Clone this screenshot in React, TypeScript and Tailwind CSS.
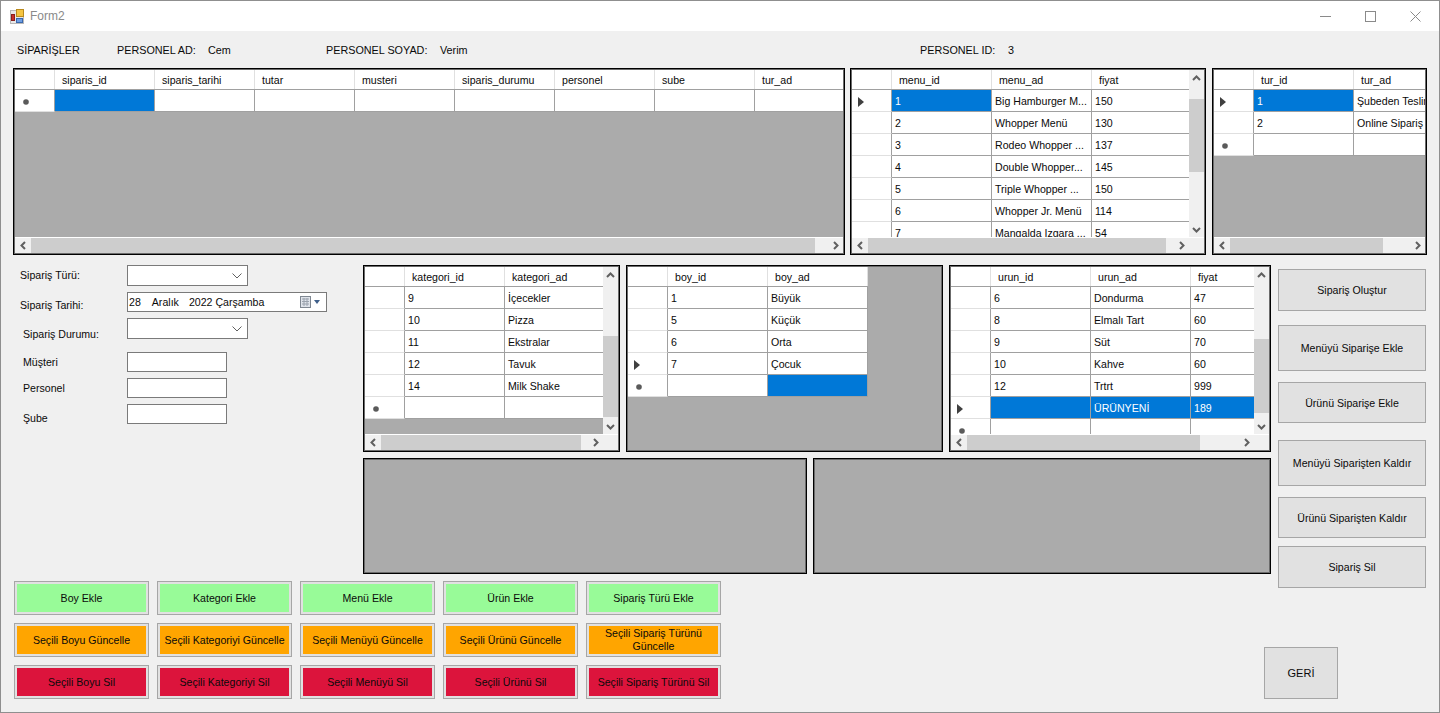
import type { ReactNode } from 'react';

type Cell = { text?: string; selected?: boolean };
type Row = { cells: Cell[]; mark?: 'current' | 'new' };

const c = (text?: string, selected?: boolean): Cell => ({ text, selected });

function Chevron({ dir }: { dir: 'up' | 'down' | 'left' | 'right' }) {
  const points = {
    up: '1,6 4.5,2.5 8,6',
    down: '1,3 4.5,6.5 8,3',
    left: '6,1 2.5,4.5 6,8',
    right: '3,1 6.5,4.5 3,8',
  }[dir];
  return (
    <svg width="9" height="9" viewBox="0 0 9 9" fill="none" stroke="#606060" strokeWidth="2">
      <polyline points={points} />
    </svg>
  );
}

function RowHeaderCell({ mark }: { mark?: Row['mark'] }) {
  return (
    <div className="w-[40px] h-[22px] shrink-0 flex items-center pl-[8px] pt-[2px] bg-white border-r border-b border-r-[#a0a0a0] border-b-[#e0e0e0]">
      {mark === 'current' && (
        <svg width="6" height="10" viewBox="0 0 6 10" className="-ml-[2px]">
          <path d="M0 0 L6 5 L0 10 Z" fill="#404040" />
        </svg>
      )}
      {mark === 'new' && (
        <svg width="6" height="6" viewBox="0 0 6 6">
          <circle cx="3" cy="3" r="2.8" fill="#5a5a5a" />
        </svg>
      )}
    </div>
  );
}

function HScroll({ thumb, corner }: { thumb: string; corner?: boolean }) {
  return (
    <div className="h-[16px] shrink-0 flex bg-[#f0f0f0] border-t border-white">
      <div className="w-[16px] flex items-center justify-center">
        <Chevron dir="left" />
      </div>
      <div className="flex-1">
        <div className={`h-full bg-[#cdcdcd] ${thumb}`} />
      </div>
      <div className="w-[16px] flex items-center justify-center">
        <Chevron dir="right" />
      </div>
      {corner && <div className="w-[15px]" />}
    </div>
  );
}

function VScroll({ thumb }: { thumb: string }) {
  return (
    <div className="w-[15px] shrink-0 flex flex-col bg-[#f0f0f0]">
      <div className="h-[16px] flex items-center justify-center">
        <Chevron dir="up" />
      </div>
      <div className="flex-1">
        <div className={`w-full bg-[#cdcdcd] ${thumb}`} />
      </div>
      <div className="h-[16px] flex items-center justify-center">
        <Chevron dir="down" />
      </div>
    </div>
  );
}

// black line with a softer inner pixel, the screenshot's frames are about 1.5px wide
function Frame({ size, children }: { size: string; children?: ReactNode }) {
  return (
    <div className={`${size} shrink-0 border border-black p-px bg-[#6b6b6b]`}>
      <div className="w-full h-full flex flex-col bg-[#ababab]">{children}</div>
    </div>
  );
}

function DataGrid({
  size,
  columns,
  rows,
  vThumb,
  hThumb,
}: {
  size: string;
  columns: string[];
  rows: Row[];
  vThumb?: string;
  hThumb?: string;
}) {
  return (
    <Frame size={size}>
      <div className="flex-1 min-h-0 flex">
        <div className="flex-1 min-w-0 overflow-hidden">
          <div className="flex w-max h-[20px] bg-white border-b border-b-[#a0a0a0]">
            <div className="w-[40px] shrink-0 border-r border-r-[#e0e0e0]" />
            {columns.map((name) => (
              <div key={name} className="w-[100px] shrink-0 pl-[7px] pt-[2px] flex items-center border-r border-r-[#e0e0e0]">
                {name}
              </div>
            ))}
          </div>
          {rows.map((row, i) => (
            <div key={i} className="flex w-max">
              <RowHeaderCell mark={row.mark} />
              {row.cells.map((cell, j) => (
                <div
                  key={j}
                  className={`w-[100px] h-[22px] shrink-0 pl-[3px] pt-[2px] flex items-center whitespace-nowrap overflow-hidden border-r border-b border-[#a0a0a0] ${
                    cell.selected ? 'bg-[#0078d7] text-white' : 'bg-white'
                  }`}
                >
                  {cell.text}
                </div>
              ))}
            </div>
          ))}
        </div>
        {vThumb && <VScroll thumb={vThumb} />}
      </div>
      {hThumb && <HScroll thumb={hThumb} corner={Boolean(vThumb)} />}
    </Frame>
  );
}

function PlainButton({ size, children }: { size: string; children: ReactNode }) {
  return (
    <div className={`${size} flex items-center justify-center text-center bg-[#e1e1e1] border border-[#a6a6a6]`}>
      {children}
    </div>
  );
}

function ColorButton({ color, children }: { color: string; children: ReactNode }) {
  return (
    <div className="h-[34px] border border-[#a6a6a6] bg-[#e1e1e1] p-[2px]">
      <div className={`h-full flex items-center justify-center text-center leading-[13px] ${color}`}>{children}</div>
    </div>
  );
}

function FormRow({
  label,
  labelClass,
  height,
  children,
}: {
  label: string;
  labelClass: string;
  height: string;
  children: ReactNode;
}) {
  return (
    <div className={`flex items-center ${height}`}>
      <div className={`w-[114px] shrink-0 ${labelClass}`}>{label}</div>
      {children}
    </div>
  );
}

function ComboBox() {
  return (
    <div className="w-[121px] h-[21px] bg-white border border-[#7a7a7a] flex items-center justify-end pr-[5px]">
      <svg width="10" height="6" viewBox="0 0 10 6" fill="none" stroke="#606060">
        <polyline points="0.5,0.5 5,5 9.5,0.5" />
      </svg>
    </div>
  );
}

function TextBox() {
  return <div className="w-[100px] h-[20px] bg-white border border-[#7a7a7a]" />;
}

const orderRows: Row[] = [{ mark: 'new', cells: [c('', true), c(), c(), c(), c(), c(), c(), c()] }];

const menuRows: Row[] = [
  { mark: 'current', cells: [c('1', true), c('Big Hamburger M...'), c('150')] },
  { cells: [c('2'), c('Whopper Menü'), c('130')] },
  { cells: [c('3'), c('Rodeo Whopper ...'), c('137')] },
  { cells: [c('4'), c('Double Whopper...'), c('145')] },
  { cells: [c('5'), c('Triple Whopper ...'), c('150')] },
  { cells: [c('6'), c('Whopper Jr. Menü'), c('114')] },
  { cells: [c('7'), c('Mangalda Izgara ...'), c('54')] },
];

const typeRows: Row[] = [
  { mark: 'current', cells: [c('1', true), c('Şubeden Teslim')] },
  { cells: [c('2'), c('Online Sipariş')] },
  { mark: 'new', cells: [c(), c()] },
];

const categoryRows: Row[] = [
  { cells: [c('9'), c('İçecekler')] },
  { cells: [c('10'), c('Pizza')] },
  { cells: [c('11'), c('Ekstralar')] },
  { cells: [c('12'), c('Tavuk')] },
  { cells: [c('14'), c('Milk Shake')] },
  { mark: 'new', cells: [c(), c()] },
];

const sizeRows: Row[] = [
  { cells: [c('1'), c('Büyük')] },
  { cells: [c('5'), c('Küçük')] },
  { cells: [c('6'), c('Orta')] },
  { mark: 'current', cells: [c('7'), c('Çocuk')] },
  { mark: 'new', cells: [c(), c('', true)] },
];

const productRows: Row[] = [
  { cells: [c('6'), c('Dondurma'), c('47')] },
  { cells: [c('8'), c('Elmalı Tart'), c('60')] },
  { cells: [c('9'), c('Süt'), c('70')] },
  { cells: [c('10'), c('Kahve'), c('60')] },
  { cells: [c('12'), c('Trtrt'), c('999')] },
  { mark: 'current', cells: [c('', true), c('ÜRÜNYENİ', true), c('189', true)] },
  { mark: 'new', cells: [c(), c(), c()] },
];

const greenButtons = ['Boy Ekle', 'Kategori Ekle', 'Menü Ekle', 'Ürün Ekle', 'Sipariş Türü Ekle'];
const orangeButtons = [
  'Seçili Boyu Güncelle',
  'Seçili Kategoriyi Güncelle',
  'Seçili Menüyü Güncelle',
  'Seçili Ürünü Güncelle',
  'Seçili Sipariş Türünü Güncelle',
];
const redButtons = [
  'Seçili Boyu Sil',
  'Seçili Kategoriyi Sil',
  'Seçili Menüyü Sil',
  'Seçili Ürünü Sil',
  'Seçili Sipariş Türünü Sil',
];

export default function App() {
  return (
    <div className="w-[1440px] h-[713px] overflow-hidden flex flex-col bg-[#f0f0f0] border border-[#8f8f8f] text-[10.6px] text-[#0a0a0a] font-['Liberation_Sans',Arial,sans-serif]">
      {/* Title bar */}
      <div className="h-[30px] shrink-0 bg-white flex items-center pl-[9px]">
        <svg width="15" height="15" viewBox="0 0 15 15">
          <rect x="0.5" y="1.5" width="13" height="13" fill="#e8e8e8" stroke="#b8b8b8" />
          <rect x="6.5" y="0.5" width="7" height="7" fill="#f5c542" stroke="#b98a1e" />
          <rect x="1.5" y="5.5" width="3" height="6" fill="#c9302c" stroke="#8a1f1c" />
          <rect x="6.5" y="9.5" width="6" height="4" fill="#6f9fe3" stroke="#3a68ad" />
        </svg>
        <span className="ml-[5px] text-[#8a8a8a] text-[12px]">Form2</span>
        <div className="ml-auto flex items-center pr-[18px] gap-[34px]">
          <svg width="11" height="11" viewBox="0 0 11 11" stroke="#8a8a8a">
            <line x1="0" y1="5.5" x2="11" y2="5.5" />
          </svg>
          <svg width="11" height="11" viewBox="0 0 11 11" fill="none" stroke="#8a8a8a">
            <rect x="0.5" y="0.5" width="10" height="10" />
          </svg>
          <svg width="11" height="11" viewBox="0 0 11 11" stroke="#8a8a8a">
            <line x1="0.5" y1="0.5" x2="10.5" y2="10.5" />
            <line x1="10.5" y1="0.5" x2="0.5" y2="10.5" />
          </svg>
        </div>
      </div>

      <div className="flex-1 min-h-0 pl-[12px]">
        {/* Personel info */}
        <div className="h-[37px] flex items-center pt-[2px] whitespace-nowrap text-[10.8px]">
          <div className="w-[104px] pl-[4px]">SİPARİŞLER</div>
          <div className="w-[91px]">PERSONEL AD:</div>
          <div className="w-[118px]">Cem</div>
          <div className="w-[114px]">PERSONEL SOYAD:</div>
          <div className="w-[480px]">Verim</div>
          <div className="w-[88px]">PERSONEL ID:</div>
          <div>3</div>
        </div>

        {/* Top grids */}
        <div className="flex gap-[5px]">
          <DataGrid
            size="w-[832px] h-[187px]"
            columns={['siparis_id', 'siparis_tarihi', 'tutar', 'musteri', 'siparis_durumu', 'personel', 'sube', 'tur_ad']}
            rows={orderRows}
            hThumb="w-[784px]"
          />
          <DataGrid
            size="w-[356px] h-[187px]"
            columns={['menu_id', 'menu_ad', 'fiyat']}
            rows={menuRows}
            vThumb="mt-[13px] h-[73px]"
            hThumb="w-[298px]"
          />
          <DataGrid
            size="w-[215px] h-[187px] ml-px"
            columns={['tur_id', 'tur_ad']}
            rows={typeRows}
            hThumb="w-[153px]"
          />
        </div>

        <div className="flex mt-[10px]">
          <div className="w-[1258px] shrink-0">
            <div className="h-[309px] flex">
              {/* Order form */}
              <div className="w-[350px] shrink-0 flex flex-col gap-[6px]">
                <FormRow label="Sipariş Türü:" labelClass="pl-[7px]" height="h-[21px]">
                  <ComboBox />
                </FormRow>
                <FormRow label="Sipariş Tarihi:" labelClass="pl-[7px] pt-[8px]" height="h-[20px]">
                  <div className="w-[200px] h-[20px] bg-white border border-[#7a7a7a] flex items-center pl-[1px] whitespace-pre">
                    <span className="mt-[2px]">28</span>
                    <span className="mt-[2px] ml-[11px]">Aralık</span>
                    <span className="mt-[2px] ml-[10px]">2022 Çarşamba</span>
                    <svg width="21" height="12" viewBox="0 0 21 12" className="ml-auto mr-[5px]">
                      <rect x="0.5" y="0.5" width="10" height="11" fill="#dfe3ea" stroke="#7f8791" />
                      <path d="M2 3h7M2 5.5h7M2 8h7M4 2v8M7 2v8" stroke="#9aa2ad" />
                      <path d="M14 4h6l-3 4z" fill="#3f5f8a" />
                    </svg>
                  </div>
                </FormRow>
                <FormRow label="Sipariş Durumu:" labelClass="pl-[10px] pt-[13px]" height="h-[21px]">
                  <ComboBox />
                </FormRow>
                <div className="mt-[7px]">
                  <FormRow label="Müşteri" labelClass="pl-[10px] pt-[2px]" height="h-[20px]">
                    <TextBox />
                  </FormRow>
                </div>
                <FormRow label="Personel" labelClass="pl-[10px] pt-[2px]" height="h-[20px]">
                  <TextBox />
                </FormRow>
                <FormRow label="Şube" labelClass="pl-[10px] pt-[10px]" height="h-[20px]">
                  <TextBox />
                </FormRow>
              </div>

              {/* Middle grids and empty panels */}
              <div className="w-[908px] shrink-0">
                <div className="flex gap-[6px]">
                  <DataGrid
                    size="w-[257px] h-[187px]"
                    columns={['kategori_id', 'kategori_ad']}
                    rows={categoryRows}
                    vThumb="mt-[53px] h-[81px]"
                    hThumb="w-[200px]"
                  />
                  <DataGrid size="w-[317px] h-[187px]" columns={['boy_id', 'boy_ad']} rows={sizeRows} />
                  <DataGrid
                    size="w-[322px] h-[187px]"
                    columns={['urun_id', 'urun_ad', 'fiyat']}
                    rows={productRows}
                    vThumb="mt-[56px] h-[74px]"
                    hThumb="w-[233px]"
                  />
                </div>
                <div className="flex gap-[6px] mt-[6px]">
                  <Frame size="w-[444px] h-[116px]" />
                  <Frame size="w-[458px] h-[116px]" />
                </div>
              </div>
            </div>

            {/* Add / update / delete buttons */}
            <div className="mt-[7px] ml-px w-[707px] grid grid-cols-5 gap-[8px]">
              {greenButtons.map((t) => (
                <ColorButton key={t} color="bg-[#98fb98]">
                  {t}
                </ColorButton>
              ))}
              {orangeButtons.map((t) => (
                <ColorButton key={t} color="bg-[#ffa500]">
                  {t}
                </ColorButton>
              ))}
              {redButtons.map((t) => (
                <ColorButton key={t} color="bg-[#dc143c]">
                  {t}
                </ColorButton>
              ))}
            </div>
          </div>

          {/* Order actions */}
          <div className="w-[148px] ml-[7px] shrink-0 flex flex-col">
            <div className="mt-[4px]">
              <PlainButton size="h-[42px] pt-[2px]">Sipariş Oluştur</PlainButton>
            </div>
            <div className="mt-[14px]">
              <PlainButton size="h-[46px] pt-[2px]">Menüyü Siparişe Ekle</PlainButton>
            </div>
            <div className="mt-[11px]">
              <PlainButton size="h-[41px] pt-[2px]">Ürünü Siparişe Ekle</PlainButton>
            </div>
            <div className="mt-[17px]">
              <PlainButton size="h-[46px] pt-[2px]">Menüyü Siparişten Kaldır</PlainButton>
            </div>
            <div className="mt-[11px]">
              <PlainButton size="h-[41px] pt-[2px]">Ürünü Siparişten Kaldır</PlainButton>
            </div>
            <div className="mt-[8px]">
              <PlainButton size="h-[42px] pt-[2px]">Sipariş Sil</PlainButton>
            </div>
            <div className="mt-[59px] -ml-[14px]">
              <PlainButton size="w-[74px] h-[52px] text-[11px]">GERİ</PlainButton>
            </div>
          </div>
        </div>
      </div>
    </div>
  );
}
